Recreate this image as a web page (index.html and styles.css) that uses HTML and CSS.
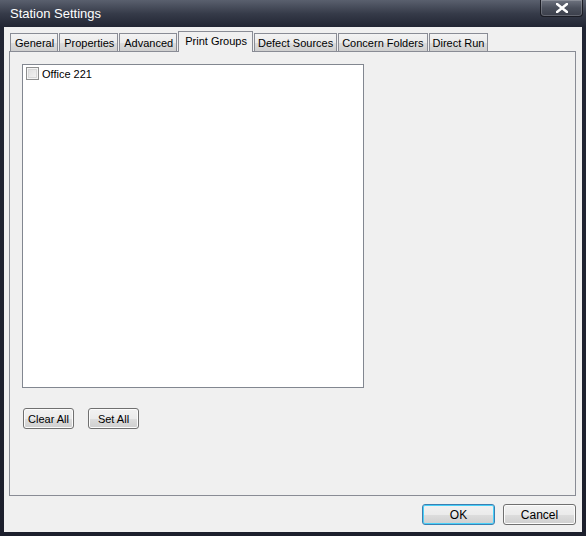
FILE: index.html
```html
<!DOCTYPE html>
<html>
<head>
<meta charset="utf-8">
<link rel="stylesheet" href="styles.css">
</head>
<body>
<div class="window">
  <div class="titlebar">
    <span class="title">Station Settings</span>
    <div class="close">
      <svg width="12" height="10" viewBox="0 0 12 10"><path d="M1 1 L11 9 M11 1 L1 9" stroke="#fff" stroke-width="2.6" stroke-linecap="square"/></svg>
    </div>
  </div>
  <div class="client">
    <div class="tabs">
      <div class="tab">General</div>
      <div class="tab">Properties</div>
      <div class="tab">Advanced</div>
      <div class="tab active">Print Groups</div>
      <div class="tab">Defect Sources</div>
      <div class="tab">Concern Folders</div>
      <div class="tab">Direct Run</div>
    </div>
    <div class="panel">
      <div class="listbox">
        <div class="item"><span class="check"></span><span>Office 221</span></div>
      </div>
      <div class="row">
        <button class="btn small">Clear All</button>
        <button class="btn small">Set All</button>
      </div>
    </div>
    <div class="footer">
      <button class="btn big default">OK</button>
      <button class="btn big">Cancel</button>
    </div>
  </div>
</div>
</body>
</html>
```
FILE: styles.css
```css
html, body {
  margin: 0;
  padding: 0;
  background: #1e2130;
}
.window {
  width: 586px;
  height: 536px;
  box-sizing: border-box;
  background: linear-gradient(#5a606e 0px, #353a48 14px, #222634 27px, #1c1f2c 100%);
  display: flex;
  flex-direction: column;
  padding: 0 4px 4px 4px;
  font-family: "Liberation Sans", Arial, sans-serif;
  font-size: 11px;
  color: #000;
}
.titlebar {
  height: 27px;
  display: flex;
  justify-content: space-between;
  align-items: flex-start;
  flex: none;
}
.title {
  color: #fff;
  font-size: 13px;
  margin-left: 6px;
  margin-top: 6px;
}
.close {
  width: 41px;
  height: 16px;
  margin-right: -1px;
  border: 1px solid #1a1c24;
  border-top: none;
  border-radius: 0 0 4px 4px;
  background: linear-gradient(#6f7480, #4b505c 50%, #3a3e4a);
  box-shadow: inset 0 0 0 1px rgba(255,255,255,0.2);
  display: flex;
  align-items: center;
  justify-content: center;
}
.client {
  flex: 1;
  background: #f0f0f0;
  padding: 4px 6px 0 5px;
  display: flex;
  flex-direction: column;
}
.tabs {
  display: flex;
  align-items: flex-end;
  padding-left: 1px;
  height: 21px;
  position: relative;
  z-index: 1;
  margin-bottom: -1px;
}
.tab {
  height: 18px;
  line-height: 18px;
  padding: 0 3px 0 4px;
  border: 1px solid #898c95;
  border-bottom: none;
  margin-right: 1px;
  background: linear-gradient(#f3f3f3, #ebebeb 50%, #dddddd 51%, #cfcfcf);
  margin-bottom: 1px;
  white-space: nowrap;
  box-sizing: border-box;
}
.tab:nth-child(n+5) {
  padding: 0 3px 0 3px;
}
.tab.active {
  height: 21px;
  line-height: 18px;
  background: #f0f0f0;
  margin-bottom: 0;
  padding: 0 5px 0 6px;
}
.panel {
  height: 445px;
  border: 1px solid #898c95;
  background: #f0f0f0;
  box-sizing: border-box;
  padding: 12px 12px 0 12px;
}
.listbox {
  width: 342px;
  height: 324px;
  box-sizing: border-box;
  border: 1px solid #828790;
  background: #fff;
  padding: 1px 3px;
}
.item {
  display: flex;
  align-items: center;
  height: 15px;
  gap: 3px;
}
.check {
  width: 13px;
  height: 13px;
  box-sizing: border-box;
  border: 1px solid #8e8f8f;
  background: linear-gradient(135deg, #dcdcdc, #f6f6f6);
  box-shadow: inset 0 0 0 1px #f4f4f4, inset 0 0 0 2px #d8d8d8;
}
.row {
  display: flex;
  gap: 14px;
  margin-top: 20px;
  padding-left: 1px;
}
.btn {
  font-family: "Liberation Sans", Arial, sans-serif;
  font-size: 11px;
  color: #000;
  height: 21px;
  padding: 0;
  border: 1px solid #707070;
  border-radius: 3px;
  background: linear-gradient(#f2f2f2, #ebebeb 50%, #dddddd 51%, #cfcfcf);
  box-shadow: inset 0 0 0 1px #fcfcfc;
}
.btn.small { width: 51px; }
.btn.big { width: 73px; font-size: 12px; }
.btn.default {
  border-color: #3c7fb1;
  box-shadow: inset 0 0 0 1px #48d0f9;
}
.footer {
  display: flex;
  justify-content: flex-end;
  gap: 8px;
  margin-top: 8px;
}
```
